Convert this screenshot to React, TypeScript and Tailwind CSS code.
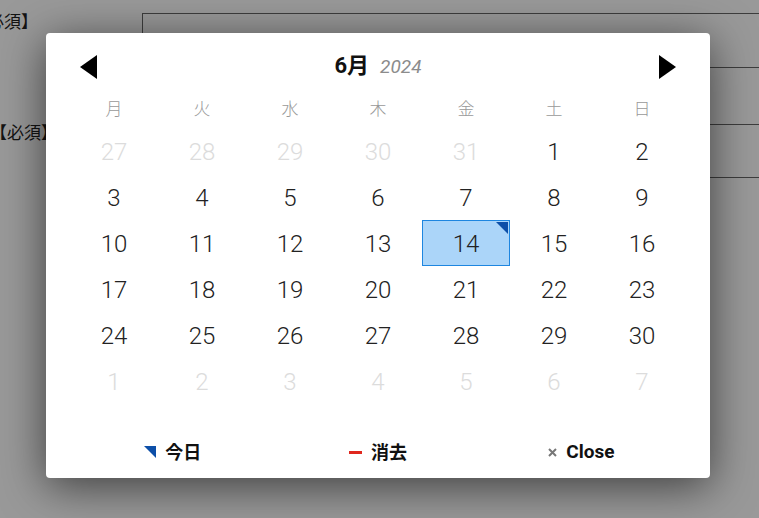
import React from "react";

const FONT = { fontFamily: 'Roboto, "Noto Sans CJK JP", sans-serif' };

type Cell = { d: number; cur: boolean; sel?: boolean };

const weeks: Cell[][] = [
  [
    { d: 27, cur: false },
    { d: 28, cur: false },
    { d: 29, cur: false },
    { d: 30, cur: false },
    { d: 31, cur: false },
    { d: 1, cur: true },
    { d: 2, cur: true },
  ],
  [3, 4, 5, 6, 7, 8, 9].map((d) => ({ d, cur: true })),
  [10, 11, 12, 13, 14, 15, 16].map((d) => ({ d, cur: true, sel: d === 14 })),
  [17, 18, 19, 20, 21, 22, 23].map((d) => ({ d, cur: true })),
  [24, 25, 26, 27, 28, 29, 30].map((d) => ({ d, cur: true })),
  [1, 2, 3, 4, 5, 6, 7].map((d) => ({ d, cur: false })),
];

const weekdays = ["月", "火", "水", "木", "金", "土", "日"];

function TriLeft() {
  return (
    <svg width="17" height="24" viewBox="0 0 17 24">
      <polygon points="17,0 17,24 0,12" fill="#000" />
    </svg>
  );
}

function TriRight() {
  return (
    <svg width="17" height="24" viewBox="0 0 17 24">
      <polygon points="0,0 0,24 17,12" fill="#000" />
    </svg>
  );
}

export default function App() {
  return (
    <div
      className="relative w-[759px] h-[518px] overflow-hidden bg-white"
      style={FONT}
    >
      {/* background form */}
      <div className="pt-[13px] flex flex-col gap-[56px] text-[17px] text-[#222]">
        <div className="flex h-[55px]">
          <div className="w-[142px] shrink-0">
            <span className="block whitespace-nowrap ml-[-30px] mt-[-3px] leading-[24px]">
              【必須】
            </span>
          </div>
          <div className="w-[700px] shrink-0 border border-[#666]" />
        </div>
        <div className="flex h-[54px]">
          <div className="w-[142px] shrink-0">
            <span className="block whitespace-nowrap ml-[-10px] mt-[-3px] leading-[24px]">
              【必須】
            </span>
          </div>
          <div className="w-[700px] shrink-0 border border-[#666]" />
        </div>
      </div>

      {/* overlay */}
      <div className="absolute inset-0 bg-black/40 pl-[46px] pt-[33px]">
        <div className="w-[664px] h-[445px] bg-white rounded-[4px] shadow-[0_8px_45px_rgba(0,0,0,0.6)] px-[24px] pt-[12px] flex flex-col">
          {/* header */}
          <div className="h-[44px] flex items-center justify-between px-[10px]">
            <TriLeft />
            <div className="flex items-baseline mt-[-3px]">
              <span className="text-[22px] font-bold text-[#111]">6月</span>
              <span className="text-[19px] italic text-[#8c8c8c] ml-[11px]">
                2024
              </span>
            </div>
            <TriRight />
          </div>

          {/* weekdays */}
          <div className="grid grid-cols-7 h-[39px] pt-[2px] items-center text-center text-[17px] text-[#999] font-light">
            {weekdays.map((w) => (
              <div key={w}>{w}</div>
            ))}
          </div>

          {/* dates */}
          <div className="flex flex-col">
            {weeks.map((row, i) => (
              <div key={i} className="grid grid-cols-7">
                {row.map((c, j) => (
                  <div
                    key={j}
                    className={
                      c.sel
                        ? "relative h-[46px] pt-[2px] flex items-center justify-center text-[24px] font-light text-[#222] bg-[#abd5f9] border border-[#1e86e0]"
                        : c.cur
                        ? "h-[46px] pt-[2px] flex items-center justify-center text-[24px] font-light text-[#222]"
                        : "h-[46px] pt-[2px] flex items-center justify-center text-[24px] font-light text-[#dcdcdc]"
                    }
                  >
                    {c.d}
                    {c.sel && (
                      <svg
                        className="absolute top-[1px] right-[1px]"
                        width="12"
                        height="12"
                        viewBox="0 0 12 12"
                      >
                        <polygon points="0,0 12,0 12,12" fill="#0d4fa8" />
                      </svg>
                    )}
                  </div>
                ))}
              </div>
            ))}
          </div>

          {/* footer */}
          <div className="grid grid-cols-3 mt-[28px] h-[40px] items-center text-[18px] font-bold text-[#111]">
            <div className="flex items-center justify-center gap-[9px]">
              <svg width="12" height="12" viewBox="0 0 12 12">
                <polygon points="0,0 12,0 12,12" fill="#0d4fa8" />
              </svg>
              <span>今日</span>
            </div>
            <div className="flex items-center justify-center gap-[9px]">
              <span className="block w-[13px] h-[3px] bg-[#e0281e]" />
              <span>消去</span>
            </div>
            <div className="flex items-center justify-center gap-[9px] mr-[4px]">
              <svg width="9" height="9" viewBox="0 0 9 9">
                <path
                  d="M1 1 L8 8 M8 1 L1 8"
                  stroke="#777"
                  strokeWidth="2"
                  strokeLinecap="butt"
                />
              </svg>
              <span className="text-[19px]">Close</span>
            </div>
          </div>
        </div>
      </div>
    </div>
  );
}
